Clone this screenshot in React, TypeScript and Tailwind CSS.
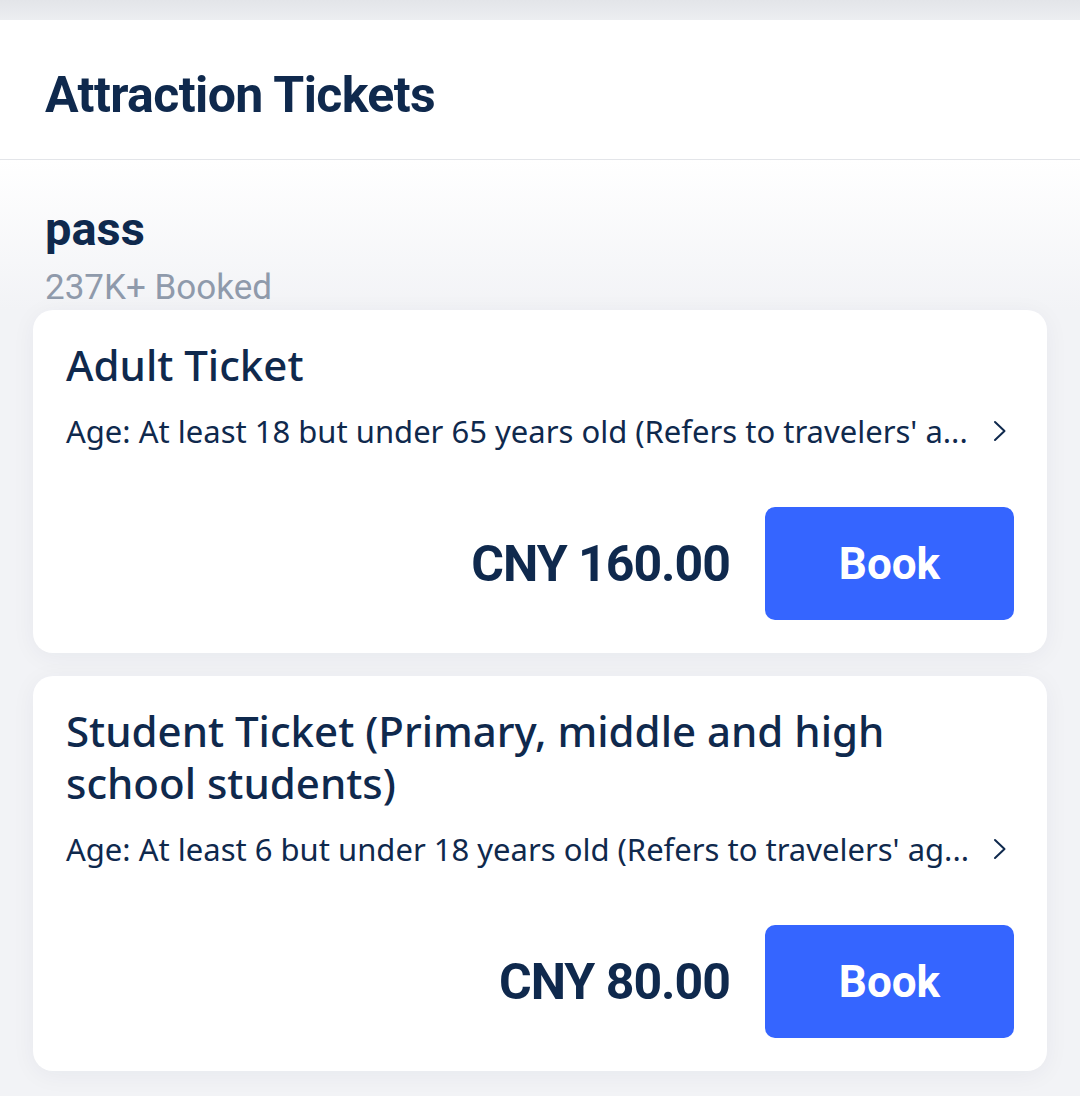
import React from "react";

const navy = "text-[#0f294d]";

function Chevron() {
  return (
    <svg width="16" height="24" viewBox="0 0 16 24" fill="none" className="mr-[6px] shrink-0">
      <path d="M3 3 L12.5 12 L3 21" stroke="#0f294d" strokeWidth="2" strokeLinecap="round" strokeLinejoin="round" />
    </svg>
  );
}

function TicketCard({ title, age, price }: { title: string; age: string; price: string }) {
  return (
    <div className="mx-[33px] rounded-[20px] bg-white px-[33px] pt-[29px] pb-[33px] shadow-[0_4px_24px_rgba(15,41,77,0.05)]">
      <div className={`${navy} text-[42px] leading-[52px] font-medium pr-[100px]`} style={{ fontFamily: '"Noto Sans", sans-serif' }}>
        {title}
      </div>
      <div className="mt-[20px] flex items-center justify-between gap-[14px]">
        <div className={`${navy} whitespace-nowrap text-[31px] leading-[40px]`} style={{ fontFamily: '"Noto Sans", sans-serif' }}>
          {age}
        </div>
        <Chevron />
      </div>
      <div className="mt-[56px] flex items-center justify-end gap-[35px]">
        <span className={`${navy} text-[50px] leading-none font-bold tracking-[-1px]`} style={{ fontFamily: 'Roboto, sans-serif' }}>
          {price}
        </span>
        <button className="flex h-[113px] w-[249px] items-center justify-center rounded-[10px] bg-[#3565ff] text-[44px] font-bold text-white" style={{ fontFamily: 'Roboto, sans-serif' }}>
          Book
        </button>
      </div>
    </div>
  );
}

export default function App() {
  return (
    <div className="h-[1096px] w-[1080px] overflow-hidden bg-[#f2f3f6]" style={{ fontFamily: 'Roboto, "Noto Sans", sans-serif' }}>
      <div className="h-[20px] bg-gradient-to-b from-[#e3e5e9] to-[#eceef1]" />
      <div className="h-[140px] border-b border-[#e3e5e9] bg-white px-[45px] pt-[45px]">
        <h1 className={`${navy} text-[50px] leading-[60px] font-bold tracking-[-0.6px]`}>Attraction Tickets</h1>
      </div>
      <div className="bg-gradient-to-b from-white to-[#f2f3f6] pb-[1px]">
        <div className="px-[45px] pt-[41px]">
          <div className={`${navy} text-[47px] leading-[56px] font-bold`}>pass</div>
          <div className="mt-[10px] text-[35px] leading-[42px] text-[#8f9aab]">237K+ Booked</div>
        </div>
      </div>
      <div className="flex flex-col gap-[23px]">
        <TicketCard
          title="Adult Ticket"
          age="Age: At least 18 but under 65 years old (Refers to travelers' a..."
          price="CNY 160.00"
        />
        <TicketCard
          title="Student Ticket (Primary, middle and high school students)"
          age="Age: At least 6 but under 18 years old (Refers to travelers' ag..."
          price="CNY 80.00"
        />
      </div>
    </div>
  );
}
